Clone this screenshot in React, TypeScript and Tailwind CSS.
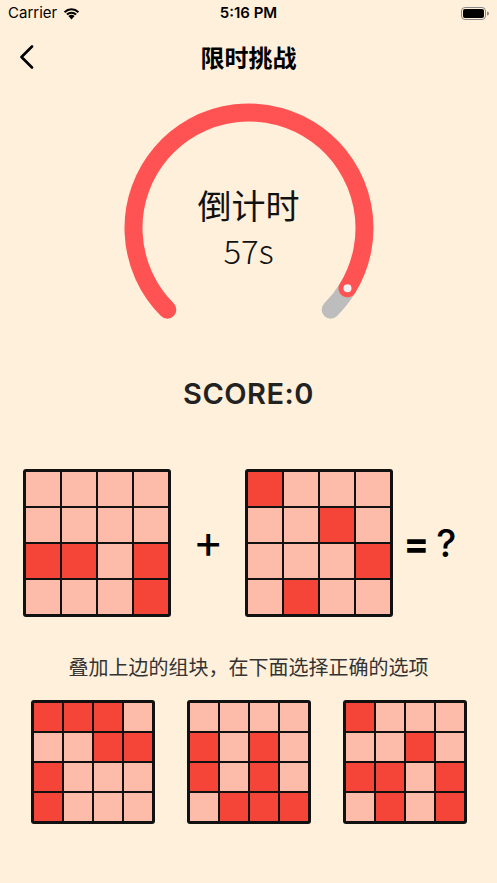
import React from "react";

const DARK = "#F44538";
const LIGHT = "#FDBBA9";

const mainA = [
  [0, 0, 0, 0],
  [0, 0, 0, 0],
  [1, 1, 0, 1],
  [0, 0, 0, 1],
];
const mainB = [
  [1, 0, 0, 0],
  [0, 0, 1, 0],
  [0, 0, 0, 1],
  [0, 1, 0, 0],
];
const options = [
  [
    [1, 1, 1, 0],
    [0, 0, 1, 1],
    [1, 0, 0, 0],
    [1, 0, 0, 0],
  ],
  [
    [0, 0, 0, 0],
    [1, 0, 1, 0],
    [1, 0, 1, 0],
    [0, 1, 1, 1],
  ],
  [
    [1, 0, 0, 0],
    [0, 0, 1, 0],
    [1, 1, 0, 1],
    [0, 1, 0, 1],
  ],
];

function Block({ cells, size }: { cells: number[][]; size: "lg" | "sm" }) {
  const box = size === "lg" ? "w-[148px] h-[148px]" : "w-[124px] h-[124px]";
  return (
    <div className={`${box} grid grid-cols-4 grid-rows-4 gap-[2px] rounded-[3px] bg-[#111] p-[3px]`}>
      {cells.flat().map((c, i) => (
        <div key={i} style={{ backgroundColor: c ? DARK : LIGHT }} />
      ))}
    </div>
  );
}

function Gauge() {
  const cx = 125;
  const cy = 125;
  const r = 115.5;
  const pt = (deg: number) => {
    const a = (deg * Math.PI) / 180;
    return [cx + r * Math.cos(a), cy + r * Math.sin(a)];
  };
  // angles clockwise from +x, arc runs 135° -> 405°
  const start = 135;
  const end = 405;
  const progress = 57 / 60;
  const split = start + (end - start) * progress;
  const [sx, sy] = pt(start);
  const [mx, my] = pt(split);
  const [ex, ey] = pt(end);
  const redLarge = split - start > 180 ? 1 : 0;
  return (
    <div className="relative mt-[15px] h-[250px] w-[250px]">
      <svg className="absolute inset-0" width="250" height="250" viewBox="0 0 250 250">
        <path
          d={`M ${mx} ${my} A ${r} ${r} 0 0 1 ${ex} ${ey}`}
          fill="none"
          stroke="#BDBDBD"
          strokeWidth="18"
          strokeLinecap="round"
        />
        <path
          d={`M ${sx} ${sy} A ${r} ${r} 0 ${redLarge} 1 ${mx} ${my}`}
          fill="none"
          stroke="#FF5353"
          strokeWidth="18"
          strokeLinecap="round"
        />
        <circle cx={mx} cy={my} r="4" fill="#F2F2F2" />
      </svg>
      <div className="flex h-full flex-col items-center pt-[82px] font-['Noto_Sans_CJK_SC',sans-serif] text-[#111]">
        <div className="text-[34px] leading-[40px]">倒计时</div>
        <div className="mt-[6px] text-[33px] font-light leading-[38px]">57s</div>
      </div>
    </div>
  );
}

export default function App() {
  return (
    <div className="flex min-h-[883px] w-full flex-col items-center bg-[#FEF0DB] font-['Noto_Sans_CJK_SC',sans-serif] text-black">
      <div className="flex h-[26px] w-full items-center justify-between px-[8px] font-['Inter',sans-serif] text-[15px]">
        <div className="flex w-[120px] items-center gap-[5px]">
          <span>Carrier</span>
          <svg width="19" height="14" viewBox="0 0 17 13">
            <path d="M8.5 12.5 L5.6 9.4 A4.2 4.2 0 0 1 11.4 9.4 Z" fill="#000" />
            <path d="M3.6 7.3 A7 7 0 0 1 13.4 7.3 L12.1 8.7 A5.2 5.2 0 0 0 4.9 8.7 Z" fill="#000" />
            <path d="M1.4 5 A10.2 10.2 0 0 1 15.6 5 L14.3 6.4 A8.3 8.3 0 0 0 2.7 6.4 Z" fill="#000" />
          </svg>
        </div>
        <span className="font-semibold">5:16 PM</span>
        <div className="flex w-[120px] justify-end">
          <svg width="28" height="13" viewBox="0 0 28 13">
            <rect x="0.5" y="0.5" width="24" height="12" rx="3.5" fill="none" stroke="#888" />
            <rect x="2" y="2" width="21" height="9" rx="2" fill="#000" />
            <path d="M26 4.5 a1.5 1.5 0 0 1 0 4 z" fill="#888" />
          </svg>
        </div>
      </div>

      <div className="relative flex h-[62px] w-full items-center justify-center">
        <svg className="absolute left-[19px] top-[19px]" width="16" height="24" viewBox="0 0 16 24">
          <polyline points="13,1.5 2.5,12 13,22.5" fill="none" stroke="#000" strokeWidth="2.6" strokeLinecap="round" strokeLinejoin="round" />
        </svg>
        <span className="text-[24px] font-bold">限时挑战</span>
      </div>

      <Gauge />

      <div className="mt-[24px] font-['Inter',sans-serif] text-[29px] font-semibold leading-[34px] tracking-[0.5px] text-[#222]">
        SCORE:0
      </div>

      <div className="mt-[58px] flex w-full items-center pl-[23px]">
        <Block cells={mainA} size="lg" />
        <span className="ml-[22px] mr-[22px] pb-[4px] font-['Inter',sans-serif] text-[46px] font-normal leading-none">+</span>
        <Block cells={mainB} size="lg" />
        <span className="ml-[10px] font-['Inter',sans-serif] text-[38px] font-bold leading-none">=</span>
        <span className="ml-[7px] font-['Inter',sans-serif] text-[38px] font-medium leading-none">?</span>
      </div>

      <div className="mt-[36px] text-[20px] leading-[27px] text-[#333]">
        叠加上边的组块，在下面选择正确的选项
      </div>

      <div className="mt-[20px] flex w-full justify-center gap-[32px] pl-[1px]">
        {options.map((o, i) => (
          <Block key={i} cells={o} size="sm" />
        ))}
      </div>
    </div>
  );
}
